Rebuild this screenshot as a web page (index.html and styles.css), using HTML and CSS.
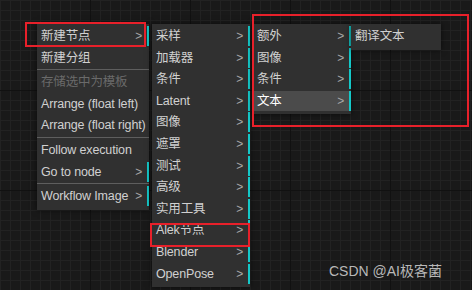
FILE: index.html
```html
<!DOCTYPE html>
<html lang="zh-CN">
<head>
    <meta charset="UTF-8">
    <title>ComfyUI Context Menu</title>
    <link rel="stylesheet" href="styles.css">
</head>
<body>

<div class="canvas">

    <div class="menu menu-main">
        <div class="entry sub">新建节点<span class="arrow">&gt;</span></div>
        <div class="entry">新建分组</div>
        <div class="sep"></div>
        <div class="entry disabled">存储选中为模板</div>
        <div class="entry">Arrange (float left)</div>
        <div class="entry">Arrange (float right)</div>
        <div class="sep"></div>
        <div class="entry">Follow execution</div>
        <div class="entry sub">Go to node<span class="arrow">&gt;</span></div>
        <div class="sep"></div>
        <div class="entry sub">Workflow Image<span class="arrow">&gt;</span></div>
    </div>

    <div class="menu menu-cat">
        <div class="entry sub">采样<span class="arrow">&gt;</span></div>
        <div class="entry sub">加载器<span class="arrow">&gt;</span></div>
        <div class="entry sub">条件<span class="arrow">&gt;</span></div>
        <div class="entry sub">Latent<span class="arrow">&gt;</span></div>
        <div class="entry sub">图像<span class="arrow">&gt;</span></div>
        <div class="entry sub">遮罩<span class="arrow">&gt;</span></div>
        <div class="entry sub">测试<span class="arrow">&gt;</span></div>
        <div class="entry sub">高级<span class="arrow">&gt;</span></div>
        <div class="entry sub">实用工具<span class="arrow">&gt;</span></div>
        <div class="entry sub">Alek节点<span class="arrow">&gt;</span></div>
        <div class="entry sub">Blender<span class="arrow">&gt;</span></div>
        <div class="entry sub">OpenPose<span class="arrow">&gt;</span></div>
    </div>

    <div class="menu menu-alek">
        <div class="entry sub">额外<span class="arrow">&gt;</span></div>
        <div class="entry sub">图像<span class="arrow">&gt;</span></div>
        <div class="entry sub">条件<span class="arrow">&gt;</span></div>
        <div class="entry sub active">文本<span class="arrow">&gt;</span></div>
    </div>

    <div class="menu menu-text">
        <div class="entry">翻译文本</div>
    </div>

    <!-- annotation boxes -->
    <div class="mark mark-new"></div>
    <div class="mark mark-alek"></div>
    <div class="mark mark-group"></div>

    <div class="watermark">CSDN @AI极客菌</div>
</div>

</body>
</html>
```

FILE: styles.css
```css
body {
    margin: 0;
    background-color: #191919;
    font-family: 'Liberation Sans', 'Noto Sans CJK SC', sans-serif;
}

.canvas {
    position: relative;
    width: 472px;
    height: 290px;
    overflow: hidden;
    background-color: #191919;
    background-image:
        linear-gradient(#111 1px, transparent 1px),
        linear-gradient(90deg, #111 1px, transparent 1px),
        linear-gradient(#222 1px, transparent 1px),
        linear-gradient(90deg, #222 1px, transparent 1px);
    background-size: 100px 100px, 100px 100px, 10px 10px, 10px 10px;
    background-position: -10px -10px, -10px -10px, 0 0, 0 0;
}

/* Context menus */
.menu {
    position: absolute;
    top: 24px;
    background-color: #303030;
    box-shadow: 0 0 6px rgba(0, 0, 0, 0.6);
    padding: 2px 0;
}

.menu-main {
    left: 37px;
    width: 112px;
}

.menu-cat {
    left: 152px;
    width: 98px;
}

.menu-alek {
    left: 253px;
    width: 98px;
}

.menu-text {
    left: 351px;
    width: 90px;
}

.entry {
    position: relative;
    height: 20px;
    line-height: 20px;
    margin-bottom: 1.6px;
    padding: 0 4px;
    font-size: 12.5px;
    letter-spacing: -0.15px;
    color: #d0d0d0;
    white-space: nowrap;
}

.entry.sub {
    border-right: 2px solid #14c8c8;
}

.entry.disabled {
    color: #6a6a6a;
}

.entry.active {
    background-color: #4b4b4b;
    color: #fff;
}

.arrow {
    position: absolute;
    right: 5px;
    top: 0;
    color: #a8a8a8;
    font-size: 12px;
}

.sep {
    height: 1px;
    margin: 1px 0 2px;
    background-color: #5e5e5e;
}

/* Red annotation frames */
.mark {
    position: absolute;
    border: 2px solid #e8202a;
}

.mark-new {
    left: 25px;
    top: 22px;
    width: 117px;
    height: 21px;
}

.mark-alek {
    left: 150px;
    top: 223px;
    width: 96px;
    height: 20px;
}

.mark-group {
    left: 252px;
    top: 14px;
    width: 213px;
    height: 109px;
}

.watermark {
    position: absolute;
    left: 329px;
    top: 260px;
    font-size: 14px;
    color: #b8b8b8;
}
```
